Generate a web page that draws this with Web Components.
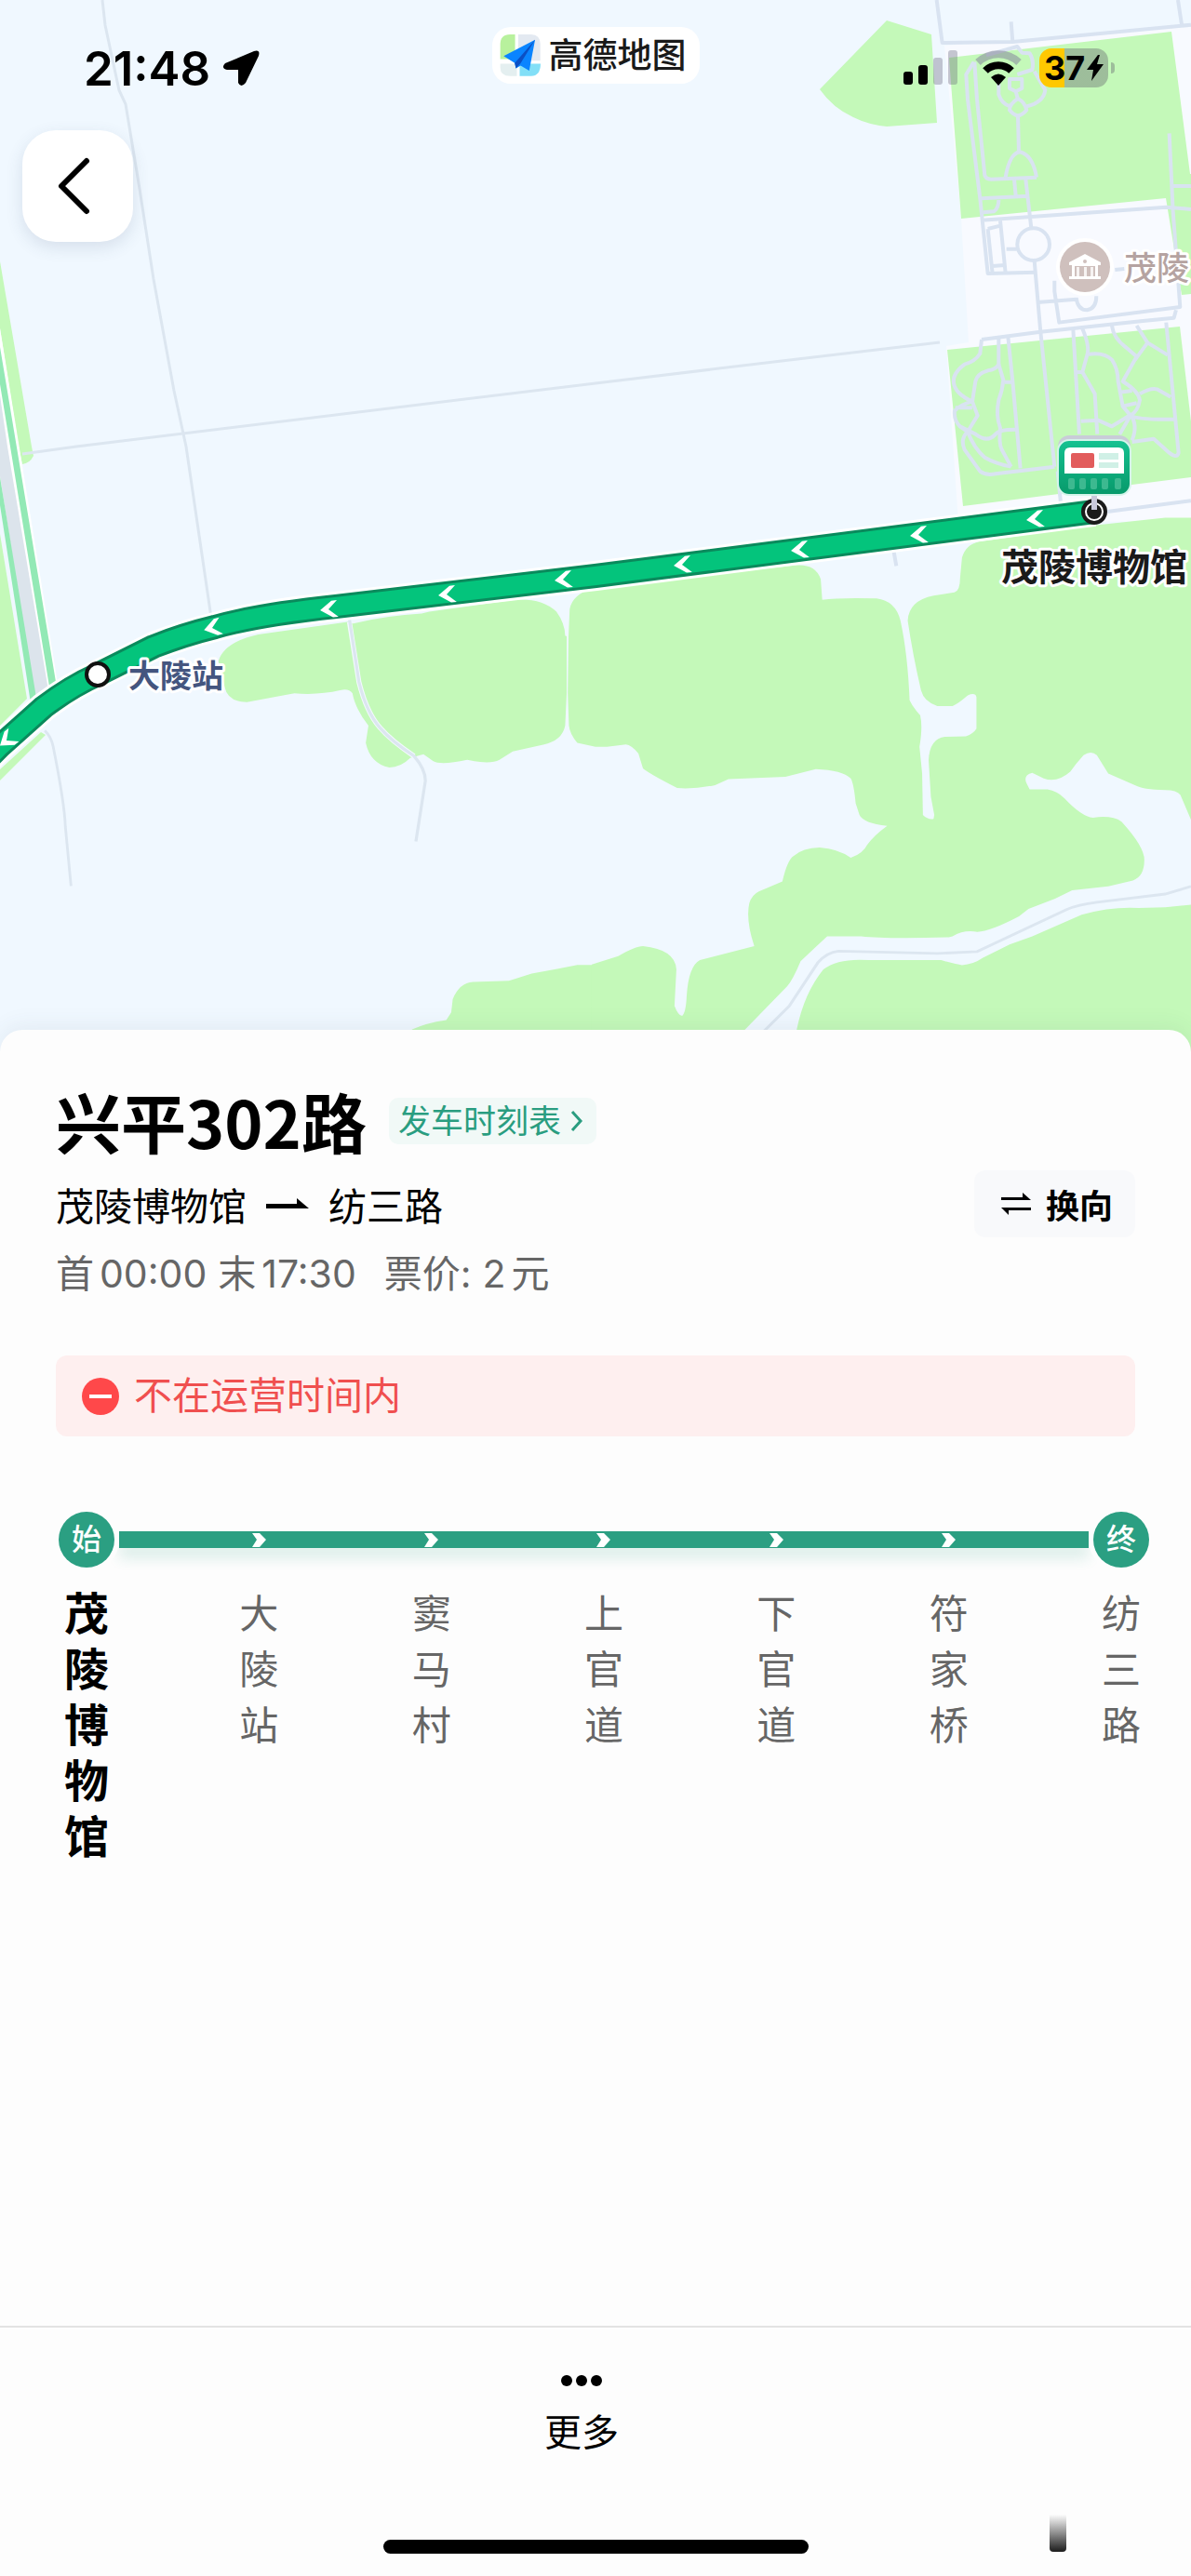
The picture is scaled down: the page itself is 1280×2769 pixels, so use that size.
<!DOCTYPE html>
<html lang="zh-CN">
<head>
<meta charset="utf-8">
<meta name="viewport" content="width=device-width, initial-scale=1">
<title>兴平302路</title>
<style>
  html, body {
    margin: 0;
    background: #fdfdfd;
  }

  body {
    font-family: Inter, "Noto Sans CJK SC", sans-serif;
    color: #000;
  }
</style>
</head>
<body>

<template id="bus-screen">
  <style>
    :host {
      display: flex;
      flex-direction: column;
      min-height: 100vh;
      position: relative;
      overflow: hidden;
    }

    .overlay {
      position: absolute;
      top: 0;
      left: 0;
      right: 0;
    }

    .sheet {
      flex: 1;
      position: relative;
      margin-top: -24px;
      padding-top: 59px;
      border-radius: 24px 24px 0 0;
      background: #fdfdfd;
      box-shadow: 0 -4px 24px rgba(60, 80, 100, 0.08);
    }
  </style>
  <slot name="map"></slot>
  <div class="overlay"><slot name="overlay"></slot></div>
  <main class="sheet"><slot></slot></main>
  <slot name="footer"></slot>
</template>

<template id="status-bar">
  <style>
    :host {
      display: grid;
      grid-template-columns: 1fr auto 1fr;
      padding: 29px 82px 0;
    }

    .side {
      display: flex;
      align-items: center;
      height: 42px;
      padding-top: 23px;
    }

    .time {
      padding-left: 8px;
      gap: 13px;
      font-size: 51px;
      font-weight: 600;
    }

    .right {
      justify-content: flex-end;
      gap: 19px;
    }

    .battery {
      position: relative;
      display: flex;
      align-items: center;
      justify-content: center;
      gap: 2px;
      width: 74px;
      height: 42px;
      margin-right: 7px;
      border-radius: 13px;
      background: linear-gradient(90deg, #ffc800 27px, rgba(100, 100, 110, 0.4) 27px);
      font-size: 36px;
      font-weight: 700;
    }

    .battery::after {
      content: "";
      position: absolute;
      left: 77px;
      top: 15px;
      width: 4px;
      height: 12px;
      border-radius: 0 6px 6px 0;
      background: rgba(100, 100, 110, 0.4);
    }

    .brand {
      display: flex;
      align-items: center;
      gap: 8px;
      height: 61px;
      padding: 0 14px 0 8px;
      border-radius: 20px;
      background: #fff;
      font-size: 37px;
      line-height: 61px;
      font-weight: 500;
      color: #1a1a1a;
    }

    svg {
      display: block;
      flex: none;
    }
  </style>
  <div class="side time">
    <span>21:48</span>
    <svg width="40" height="40" viewBox="0 0 40 40"><path d="M34 2 Q41 0 39 7 L25 36 Q20 42 17 36 V22 H5 Q-2 20 3 15Z"/></svg>
  </div>
  <div class="brand">
    <svg width="45" height="45" viewBox="52 52 132 136">
      <path d="M52 84 Q52 52 84 52 H100 V132 H52Z" fill="#b8f19d"/>
      <path d="M110 52 H152 Q182 52 182 84 V137 H110Z" fill="#e3e9f1"/>
      <path d="M52 147 H106 V187 H84 Q52 187 52 160Z" fill="#e4eff0"/>
      <path d="M115 147 H183 Q182 187 152 187 H115Z" fill="#82dff7"/>
      <path d="M165 69 L146 170 L118 153 L103 162 L99 145 L63 122Z" fill="#0a84ff"/>
      <path d="M165 69 L99 145 L103 162 L118 146Z" fill="#0b4fc4"/>
    </svg>
    <span>高德地图</span>
  </div>
  <div class="side right">
    <svg width="58" height="38" viewBox="0 0 58 38">
      <rect y="23" width="10" height="14" rx="3"/>
      <rect x="16" y="16" width="10" height="21" rx="3"/>
      <rect x="32" y="8" width="10" height="29" rx="3" fill="#646078" opacity=".35"/>
      <rect x="48" width="10" height="37" rx="3" fill="#646078" opacity=".35"/>
    </svg>
    <svg width="50" height="38" viewBox="0 0 50 38" fill="none">
      <path d="M3 13 A32 32 0 0 1 47 13" stroke="#8c8fa0" stroke-opacity=".6" stroke-width="8"/>
      <path d="M11 22 A20 20 0 0 1 39 22" stroke="#000" stroke-width="8"/>
      <path d="M17 29 Q25 22 33 29 L25 38Z" fill="#000"/>
    </svg>
    <div class="battery">
      <span>37</span>
      <svg width="18" height="28" viewBox="0 0 18 28"><path d="M12 0 L0 16 H7 L5 28 L18 10 H11 L14 0Z"/></svg>
    </div>
  </div>
</template>

<template id="back-button">
  <style>
    :host {
      display: block;
      padding: 46px 24px;
    }

    button {
      display: block;
      width: 119px;
      height: 120px;
      padding: 0;
      border: 0;
      border-radius: 36px;
      background: #fff;
      box-shadow: 0 6px 18px rgba(60, 80, 110, 0.14);
    }

    svg {
      display: block;
    }
  </style>
  <button type="button" aria-label="返回">
    <svg width="119" height="120" viewBox="0 0 119 120" fill="none" stroke="#000" stroke-width="6" stroke-linecap="round" stroke-linejoin="round"><path d="M69 33 L42 60 L69 87"/></svg>
  </button>
</template>

<template id="route-map">
  <style>
    :host {
      display: block;
      aspect-ratio: 1280 / 1131;
      background: #f0f8ff;
    }

    svg {
      display: block;
      width: 100%;
      height: 100%;
    }

    .wood { fill: #c4f9b9; }
    .road { fill: none; stroke: #dce6f0; }
    .path { fill: none; stroke: #d9e3f1; stroke-width: 12; stroke-linejoin: round; }

    text {
      paint-order: stroke;
      stroke: #fff;
      stroke-width: 6px;
      stroke-linejoin: round;
      font-weight: 500;
    }

    .station {
      font-weight: 700;
    }
  </style>
  <svg viewBox="0 0 1280 1131" preserveAspectRatio="xMidYMid slice">
    <defs>
      <path id="chevron" d="M-9 0 L4 -9 H10 L0 0 L10 9 H4Z" fill="#fff" transform="rotate(-6)"/>
      <linearGradient id="sign" x2="0" y2="1">
        <stop offset="0" stop-color="#16c291"/>
        <stop offset="1" stop-color="#07996a"/>
      </linearGradient>
    </defs>

    <path fill="#f8faff" d="M1015 49 L1280 29 V560 L1030 562 L1017 372 L1041 368 L1033 235Z"/>
    <path class="wood" d="M953 22 L1001 37 L1007 132 L953 136 Q933 134 917 126 Q895 116 881 96Z"/>
    <path class="wood" d="M1020 62 L1259 34 L1279 187 H1280 V316 L1270 317 L1253 213 L1033 235Z"/>
    <path class="wood" d="M1018 376 L1268 351 L1280 453 V513 L1035 544Z"/>

    <!-- railway corridor -->
    <path class="wood" d="M0 281 L34 480 L36 490 Q32 498 24 499 L20 480 L0 353Z"/>
    <path fill="#fff" d="M0 353 L62 735 L38 758 L0 530Z"/>
    <path fill="#93e9b5" d="M0 373 L60 733 L53 738 L11 480 L0 413Z"/>
    <path fill="#dce4ec" d="M0 425 L8 480 L52 742 L38 754 L0 512Z"/>
    <path fill="#93e9b5" d="M0 513 L39 750 L33 756 L0 543Z"/>
    <path class="wood" d="M0 574 L29 751 L0 780Z"/>
    <path class="wood" d="M0 827 L44 787 L49 790 L0 839Z"/>

    <!-- woods, west part -->
    <g transform="translate(0 480) scale(.4082)">
      <path class="wood" d="M575 565 Q590 515 680 495 L915 462 L930 466 Q1020 445 1110 440 L1130 435 L1360 403 Q1430 400 1465 435 Q1487 465 1488 498 L1492 500 V650 L1488 735 Q1480 775 1430 785 L1350 803 L1315 825 Q1290 838 1230 825 Q1160 840 1140 828 L1115 810 L1080 820 Q1055 845 1025 845 Q975 835 963 780 L970 735 Q935 690 928 650 Q918 635 895 642 Q840 655 775 650 L650 673 Q600 672 592 635Z"/>
      <path class="wood" d="M1085 1535 Q1120 1518 1175 1510 L1188 1490 L1192 1455 Q1210 1412 1245 1410 L1340 1407 L1400 1388 L1470 1375 L1520 1365 H1580 V1620 H1060Z"/>
      <path class="road" style="stroke: #f4faff" stroke-width="13" d="M920 462 L945 620 Q965 700 1000 740 Q1030 775 1090 815"/>
      <path class="road" stroke-width="8" d="M920 455 L945 620 Q965 700 1000 740 Q1030 775 1090 815 Q1120 850 1120 880 L1095 1040"/>
      <path class="road" stroke-width="7" d="M118 748 Q135 765 140 790 Q170 940 172 1000 L187 1157"/>
    </g>

    <!-- woods, east part -->
    <g transform="translate(640 560) scale(.4082 .3571)">
      <path class="wood" d="M-71 347 L-68 265 Q-60 220 -10 205 L0 200 L530 133 Q580 130 593 175 L597 237 Q640 230 740 233 Q790 240 803 300 Q822 400 827 540 Q835 560 855 585 Q862 620 853 680 L860 760 L862 885 Q875 900 890 897 L892 885 L883 830 L877 720 Q880 655 920 650 L975 648 Q995 640 1003 625 V530 Q1000 515 980 525 Q955 550 940 557 H900 Q865 545 857 510 Q835 400 822 300 Q825 240 890 225 L945 215 Q960 210 960 170 L965 110 Q975 70 1010 62 L1300 15 L1500 -10 H1568 V900 L1540 825 Q1530 810 1500 810 Q1440 808 1420 795 L1350 760 L1320 705 Q1305 690 1285 705 Q1265 730 1250 755 Q1215 790 1180 775 L1150 758 Q1125 765 1135 790 L1143 808 H1190 Q1215 812 1235 835 Q1280 890 1310 893 Q1360 885 1385 905 Q1445 980 1445 1020 Q1445 1070 1415 1082 L1350 1100 L1255 1112 L1210 1137 L1140 1168 L1115 1190 Q1040 1235 1005 1237 Q970 1230 940 1250 L930 1253 Q760 1258 700 1250 H610 L540 1325 Q520 1380 505 1400 L390 1535 V1620 H-10 V1335 L60 1310 Q105 1280 125 1280 Q210 1290 213 1350 L208 1460 Q218 1490 228 1490 Q238 1480 240 1430 Q245 1340 275 1322 L418 1280 Q395 1200 405 1150 Q412 1125 430 1115 L492 1085 Q505 1020 522 1008 Q545 985 590 983 Q640 987 672 1014 Q705 1000 715 975 Q735 945 768 918 Q705 910 695 885 L685 850 Q680 790 672 775 Q650 750 580 747 L500 770 L350 777 L315 795 Q260 808 215 804 Q140 760 125 745 L113 700 Q95 675 80 673 L30 680 H0 L-48 668 Q-68 640 -70 616 L-73 519Z"/>
      <path class="wood" d="M520 1620 L530 1530 Q550 1420 600 1350 Q640 1315 720 1322 L910 1322 Q950 1335 965 1337 Q995 1335 1020 1315 L1090 1275 L1150 1250 L1280 1185 Q1360 1160 1430 1165 L1500 1163 L1568 1155 V1620Z"/>
      <path class="road" stroke-width="8" d="M440 1540 L510 1460 L585 1330 Q610 1298 640 1295 L900 1302 L1005 1296 L1240 1170 Q1270 1155 1320 1148 L1500 1123 L1568 1100"/>
    </g>

    <g class="road" stroke-width="3">
      <path d="M110 0 L113 27 L128 97 L135 112 L150 203 L165 300 L187 420 L200 480 L227 664"/>
      <path d="M24 488 L82 480 L640 412 L840 388 L1010 368"/>
    </g>

    <!-- museum park lanes, north -->
    <g class="path" transform="translate(840 0) scale(.3333)">
      <path d="M500 0 L518 138 L745 135 L1320 80 M1278 0 L1290 78 M740 70 L745 135"/>
      <path d="M660 178 L760 150 L775 170 L800 172 Q815 195 808 225 L760 240 M620 200 L595 240 L600 320 L640 640 L665 882 L820 878"/>
      <path d="M622 200 L630 320 L655 565 Q658 578 675 578 L822 572 M735 255 H775 V285 L755 295 L735 285Z M755 295 L762 320"/>
      <path d="M700 270 V305 Q710 335 735 342 M815 230 L850 290 Q845 330 790 343 M762 318 Q735 335 735 355 Q762 390 790 355 Q785 330 762 318"/>
      <path d="M762 375 L765 490 M722 572 Q735 495 768 490 Q810 500 822 572 M750 578 L755 630 M787 578 L805 735 M645 640 L795 632 M650 685 L685 682 Q700 670 700 645"/>
      <path d="M645 710 L1240 668 L1320 675"/>
      <circle cx="812" cy="788" r="52"/>
      <path d="M815 840 L835 1070 M665 738 L705 728 M665 738 L680 882 M705 712 L722 880 M725 803 H758 M680 858 L720 855"/>
      <path d="M1250 430 L1262 680 L1285 990 L895 1040 L880 940 V905 M825 975 L950 965 M950 960 Q955 1000 985 1000 Q1015 995 1015 955 M1260 600 H1320 M1075 870 L1105 867"/>
    </g>

    <!-- museum park lanes, south -->
    <g class="path" transform="translate(840 320) scale(.3333)">
      <path d="M645 135 L835 110 L1165 75 L1265 65 L1272 40"/>
      <path d="M645 135 L640 180 Q625 205 590 215 Q550 245 555 275 Q560 310 615 335"/>
      <path d="M700 130 V215 Q690 232 665 235 Q630 245 625 270 L615 335 L632 380 L600 432"/>
      <path d="M700 215 L715 265 Q712 300 700 330 Q690 380 705 420 Q700 470 710 490 L740 545 M730 125 L745 270 L770 550 M720 272 H745"/>
      <path d="M615 335 Q575 345 558 365 Q555 395 575 415 L600 432 Q575 455 590 490 L640 560 Q660 575 690 568 L880 545 M560 355 H615"/>
      <path d="M575 415 L625 440 Q665 470 690 440 Q700 425 755 425 M600 432 Q620 485 655 515 Q690 535 740 545"/>
      <path d="M835 110 L880 545 M940 100 L960 440 M970 100 Q995 160 985 185 L970 240 L1010 310 L1018 440 M950 240 H970"/>
      <path d="M990 182 Q1040 175 1065 200 Q1085 230 1085 270 L1100 350 L1125 380"/>
      <path d="M1065 90 Q1070 130 1110 160 L1145 190 L1100 270 Q1150 300 1155 330 Q1150 365 1125 380 L1090 440"/>
      <path d="M1145 90 L1180 145 L1245 185 M1180 145 L1140 200 M1090 305 L1130 300 M1100 350 L1145 340 M1155 310 Q1190 290 1210 295 L1255 320"/>
      <path d="M1240 80 L1280 500 Q1275 520 1250 500 L1200 455 L1130 465 M1125 380 Q1150 395 1270 392 M965 398 L1020 395 L1065 415 L1125 378 Q1150 410 1130 460"/>
      <path d="M890 560 L900 660 M1050 690 L1320 655 M362 820 L370 865"/>
    </g>

    <!-- bus line -->
    <g fill="none" stroke-linejoin="round">
      <path stroke="#fff" stroke-width="32" d="M-20 822 L0 802 L47 760 Q76 738 105 725 L165 695 Q198 682 231 674 Q276 661 361 652 L640 619 L1176 550"/>
      <path stroke="#0a8a5c" stroke-width="26" d="M-20 822 L0 802 L47 760 Q76 738 105 725 L165 695 Q198 682 231 674 Q276 661 361 652 L640 619 L1176 550"/>
      <path stroke="#04c47c" stroke-width="20" d="M-20 822 L0 802 L47 760 Q76 738 105 725 L165 695 Q198 682 231 674 Q276 661 361 652 L640 619 L1176 550"/>
    </g>
    <use href="#chevron" transform="translate(1112 558)"/>
    <use href="#chevron" transform="translate(987 575)"/>
    <use href="#chevron" transform="translate(859 591)"/>
    <use href="#chevron" transform="translate(733 607)"/>
    <use href="#chevron" transform="translate(605 623)"/>
    <use href="#chevron" transform="translate(480 639)"/>
    <use href="#chevron" transform="translate(353 655)"/>
    <use href="#chevron" transform="translate(228 675) rotate(-8)"/>
    <use href="#chevron" transform="translate(7 796) rotate(-32)"/>

    <circle cx="105" cy="725" r="12" fill="#fff" stroke="#111" stroke-width="4"/>
    <circle cx="1176" cy="550" r="14" fill="#1a1a1a"/>
    <circle cx="1176" cy="550" r="9" fill="#1a1a1a" stroke="#fff" stroke-width="2"/>

    <!-- bus stop sign -->
    <path d="M1173 530 h6 v18 h-6z" fill="#c9c9dc"/>
    <rect x="1137" y="468" width="78" height="40" rx="12" fill="#c9ccd8"/>
    <rect x="1137" y="473" width="78" height="59" rx="12" fill="url(#sign)" stroke="#d4f4ea" stroke-width="2"/>
    <path d="M1144 509 V487 Q1144 481 1150 481 H1202 Q1208 481 1208 487 V509Z" fill="#fff"/>
    <rect x="1151" y="487" width="25" height="16" rx="2" fill="#e25c5c"/>
    <path d="M1181 487 h21 v7 h-21z M1181 497 h21 v6 h-21z" fill="#d0f0e6"/>
    <g fill="#3db990">
      <rect x="1148" y="514" width="7" height="12" rx="2"/>
      <rect x="1160" y="514" width="7" height="12" rx="2"/>
      <rect x="1172" y="514" width="7" height="12" rx="2"/>
      <rect x="1184" y="514" width="7" height="12" rx="2"/>
      <rect x="1198" y="514" width="7" height="12" rx="2"/>
    </g>

    <!-- museum -->
    <circle cx="1166" cy="287" r="31" fill="#fff"/>
    <circle cx="1166" cy="287" r="27" fill="#cfc0bd"/>
    <path fill="#fff" d="M1166 273 L1183 282 V285 H1180 V297 H1183 V300 H1149 V297 H1152 V285 H1149 V282Z"/>
    <path fill="#cfc0bd" d="M1155 286 h22 v11 h-22z"/>
    <path fill="#fff" opacity=".8" d="M1157 287 h3 v10 h-3z M1165 287 h3 v10 h-3z M1172 287 h3 v10 h-3z"/>
    <circle cx="1166" cy="281" r="2" fill="#cfc0bd"/>

    <text x="1208" y="301" font-size="35" fill="#b5a3a1">茂陵</text>
    <text class="station" x="138" y="739" font-size="34" fill="#44557f">大陵站</text>
    <text class="station" x="1076" y="624" font-size="40" fill="#1a1a1a">茂陵博物馆</text>
  </svg>
</template>

<template id="route-header">
  <style>
    :host {
      display: flex;
      flex-direction: column;
      gap: 14px;
      padding: 0 60px;
    }

    .title, .ends, .hours {
      display: flex;
      align-items: center;
    }

    h1 {
      margin: 0;
      font: 700 70px/78px "Noto Sans CJK SC", sans-serif;
    }

    .timetable {
      display: flex;
      align-items: center;
      gap: 10px;
      margin-left: 24px;
      padding: 0 14px 0 10px;
      border-radius: 10px;
      background: #f1f9f7;
      color: #2a9d80;
      font-size: 35px;
      line-height: 50px;
      text-decoration: none;
    }

    .ends {
      height: 72px;
      gap: 21px;
      font-size: 41px;
    }

    .swap {
      display: flex;
      align-items: center;
      gap: 16px;
      height: 72px;
      margin-left: auto;
      padding: 0 24px 0 29px;
      border: 0;
      border-radius: 12px;
      background: #f8f9fb;
      color: #000;
      font: inherit;
      font-size: 36px;
      font-weight: 700;
    }

    .hours {
      gap: 6px;
      color: #666;
      font-size: 41px;
      line-height: 50px;
    }

    .last {
      margin-left: 6px;
    }

    .fare {
      margin: 0 6px 0 24px;
    }
  </style>
  <div class="title">
    <h1><slot name="name"></slot></h1>
    <a class="timetable" href="#timetable">发车时刻表
      <svg width="14" height="24" viewBox="0 0 14 24" fill="none" stroke="#2a9d80" stroke-width="3"><path d="M2 2 L11 12 L2 22"/></svg>
    </a>
  </div>
  <div class="ends">
    <slot name="from"></slot>
    <svg width="46" height="12" viewBox="0 0 46 12"><path d="M0 6 H33 V0 L46 11 H0Z"/></svg>
    <slot name="to"></slot>
    <button class="swap" type="button">
      <svg width="32" height="24" viewBox="0 0 32 24"><path d="M0 5 H23 V0 L32 8 H0Z M32 16 H0 L8 24 V19 H32Z"/></svg>
      换向
    </button>
  </div>
  <div class="hours">
    <span>首</span><time>00:00</time>
    <span class="last">末</span><time>17:30</time>
    <span class="fare">票价:</span><span>2</span><span>元</span>
  </div>
</template>

<template id="service-alert">
  <style>
    :host {
      display: flex;
      align-items: center;
      gap: 16px;
      margin: 63px 60px 0;
      padding: 0 28px;
      border-radius: 12px;
      background: #feefef;
      color: #f04f4f;
      font-size: 41px;
      line-height: 87px;
    }
  </style>
  <svg width="40" height="40" viewBox="0 0 40 40"><circle cx="20" cy="20" r="20" fill="#ff484a"/><path d="M8 18 H32 V22 H8Z" fill="#fff"/></svg>
  <slot></slot>
</template>

<template id="stop-line">
  <style>
    :host {
      display: flex;
      justify-content: space-between;
      position: relative;
      margin: 81px 45px 0 63px;
    }

    .bar {
      position: absolute;
      top: 21px;
      left: 65px;
      right: 65px;
      height: 18px;
      background: #2b9f82;
      box-shadow: 0 12px 14px rgba(43, 159, 130, 0.14);
    }
  </style>
  <div class="bar"></div>
  <slot></slot>
</template>

<template id="bus-stop">
  <style>
    :host {
      display: flex;
      flex-direction: column;
      align-items: center;
      gap: 20px;
      position: relative;
      width: 60px;
      color: #666;
      font-size: 42px;
      line-height: 60px;
    }

    :host([current]) {
      color: #000;
      font-size: 48px;
      font-weight: 700;
    }

    .mark {
      display: flex;
      align-items: center;
      justify-content: center;
      width: 60px;
      height: 60px;
      color: #fff;
      font-size: 32px;
      font-weight: 500;
    }

    .mark.end {
      border-radius: 50%;
      background: #2b9f82;
      box-shadow: 0 0 0 5px #fdfdfd;
    }

    .name {
      width: 1em;
    }
  </style>
  <div class="mark"></div>
  <div class="name"><slot></slot></div>
</template>

<template id="more-bar">
  <style>
    :host {
      display: flex;
      flex-direction: column;
      align-items: center;
      position: relative;
      border-top: 2px solid #e3e3e3;
      background: #fdfdfd;
    }

    .more {
      display: flex;
      flex-direction: column;
      align-items: center;
      gap: 24px;
      margin: 51px 30px 0 0;
      padding: 0;
      border: 0;
      background: none;
      color: #000;
      font: inherit;
      font-size: 40px;
      line-height: 52px;
    }

    .home {
      width: 457px;
      height: 15px;
      margin: 89px 0 24px;
      border-radius: 8px;
      background: #000;
    }

    .smudge {
      position: absolute;
      right: 134px;
      bottom: 26px;
      width: 18px;
      height: 40px;
      border-radius: 0 0 4px 4px;
      background: linear-gradient(#fdfdfd, #999 45%, #1c1c1c);
    }
  </style>
  <button class="more" type="button">
    <svg width="44" height="12" viewBox="0 0 44 12"><circle cx="6" cy="6" r="6"/><circle cx="22" cy="6" r="6"/><circle cx="38" cy="6" r="6"/></svg>
    更多
  </button>
  <div class="home"></div>
  <div class="smudge"></div>
</template>

<bus-screen>
  <route-map slot="map"></route-map>
  <status-bar slot="overlay"></status-bar>
  <back-button slot="overlay"></back-button>
  <route-header>
    <span slot="name">兴平302路</span>
    <span slot="from">茂陵博物馆</span>
    <span slot="to">纺三路</span>
  </route-header>
  <service-alert>不在运营时间内</service-alert>
  <stop-line>
    <bus-stop end="始" current>茂陵博物馆</bus-stop>
    <bus-stop>大陵站</bus-stop>
    <bus-stop>窦马村</bus-stop>
    <bus-stop>上官道</bus-stop>
    <bus-stop>下官道</bus-stop>
    <bus-stop>符家桥</bus-stop>
    <bus-stop end="终">纺三路</bus-stop>
  </stop-line>
  <more-bar slot="footer"></more-bar>
</bus-screen>

<script>
  (function() {
    class TemplateElement extends HTMLElement {
      constructor() {
        super();
        let tmpl = document.getElementById(this.localName);
        this.attachShadow({mode: 'open'});
        this.shadowRoot.appendChild(document.importNode(tmpl.content, true));
      }
    }

    class BusStop extends TemplateElement {
      connectedCallback() {
        let mark = this.shadowRoot.querySelector('.mark');
        let end = this.getAttribute('end');
        if (end) {
          mark.classList.add('end');
          mark.textContent = end;
        } else {
          mark.innerHTML = '<svg width="15" height="15" viewBox="0 0 15 15"><path d="M0 0 H8 L15 7 L8 15 H0 L5 7Z" fill="#fff"/></svg>';
        }
      }
    } // Class BusStop

    customElements.define('bus-screen', class extends TemplateElement {});
    customElements.define('status-bar', class extends TemplateElement {});
    customElements.define('back-button', class extends TemplateElement {});
    customElements.define('route-map', class extends TemplateElement {});
    customElements.define('route-header', class extends TemplateElement {});
    customElements.define('service-alert', class extends TemplateElement {});
    customElements.define('stop-line', class extends TemplateElement {});
    customElements.define('bus-stop', BusStop);
    customElements.define('more-bar', class extends TemplateElement {});
  })();
</script>
</body>
</html>
